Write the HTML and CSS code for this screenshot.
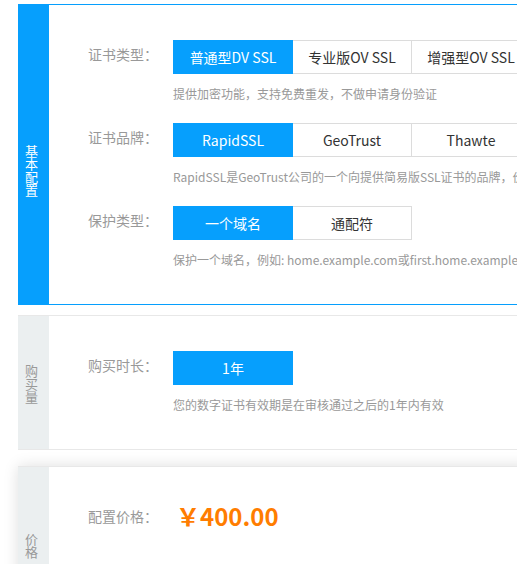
FILE: index.html
```html
<!DOCTYPE html>
<html lang="zh-CN">
<head>
<meta charset="utf-8">
<title>SSL证书配置</title>
<link rel="stylesheet" href="styles.css">
</head>
<body>
<div class="page">
  <section class="panel panel-main">
    <div class="side side-main"><span class="side-text">基本配置</span></div>
    <div class="content">
      <div class="row">
        <div class="field">
          <span class="label">证书类型：</span>
          <div class="options">
            <span class="opt active">普通型DV SSL</span>
            <span class="opt">专业版OV SSL</span>
            <span class="opt">增强型OV SSL</span>
            <span class="opt">增强型EV SSL</span>
          </div>
        </div>
        <p class="desc">提供加密功能，支持免费重发，不做申请身份验证</p>
      </div>
      <div class="row">
        <div class="field">
          <span class="label">证书品牌：</span>
          <div class="options">
            <span class="opt active">RapidSSL</span>
            <span class="opt">GeoTrust</span>
            <span class="opt">Thawte</span>
            <span class="opt">Symantec</span>
          </div>
        </div>
        <p class="desc">RapidSSL是GeoTrust公司的一个向提供简易版SSL证书的品牌，价格低廉，签发快速</p>
      </div>
      <div class="row">
        <div class="field">
          <span class="label">保护类型：</span>
          <div class="options">
            <span class="opt active">一个域名</span>
            <span class="opt">通配符</span>
          </div>
        </div>
        <p class="desc">保护一个域名，例如: home.example.com或first.home.example.com</p>
      </div>
    </div>
  </section>

  <section class="panel panel-plain">
    <div class="side side-buy"><span class="side-text">购买量</span></div>
    <div class="content">
      <div class="row">
        <div class="field">
          <span class="label">购买时长：</span>
          <div class="options">
            <span class="opt active">1年</span>
          </div>
        </div>
        <p class="desc">您的数字证书有效期是在审核通过之后的1年内有效</p>
      </div>
    </div>
  </section>

  <section class="panel panel-plain panel-shadow">
    <div class="side side-price"><span class="side-text">价格</span></div>
    <div class="content">
      <div class="row">
        <div class="field">
          <span class="label">配置价格：</span>
          <span class="price">￥400.00</span>
        </div>
      </div>
    </div>
  </section>
</div>
</body>
</html>
```

FILE: styles.css
```css
html, body {
  margin: 0;
  padding: 0;
  overflow: hidden;
  background: #fff;
}

body {
  font-family: "Noto Sans CJK SC", "Noto Sans", sans-serif;
  color: #333;
}

.page {
  width: 900px;
  padding: 4px 0 0 18px;
}

.panel {
  display: flex;
  box-sizing: border-box;
  background: #fff;
}

.panel-main {
  border: 1px solid #069ffd;
  border-left: none;
  margin-bottom: 10px;
}

.panel-plain {
  border: 1px solid #e8e8e8;
  border-left: none;
  margin-bottom: 16px;
}

.panel-shadow {
  box-shadow: 0 0 14px rgba(0, 0, 0, 0.13);
  min-height: 140px;
}

.side {
  width: 31px;
  flex: none;
  box-sizing: border-box;
  padding-left: 6px;
  background: #ebeff0;
  color: #999;
}

.side-main {
  background: #069ffd;
  color: #fff;
  padding-top: 140px;
}

.side-buy {
  padding-top: 49px;
}

.side-price {
  padding-top: 66px;
}

.side-text {
  display: block;
  writing-mode: vertical-rl;
  text-orientation: upright;
  font-size: 13px;
  line-height: 14px;
}

.content {
  flex: 1;
  padding: 35px 0 35px 39px;
}

.row {
  margin-bottom: 20px;
}

.row:last-child {
  margin-bottom: 0;
}

.field {
  display: flex;
  align-items: flex-start;
}

.label {
  width: 85px;
  flex: none;
  font-size: 14px;
  line-height: 28px;
  color: #999;
}

.options {
  display: flex;
}

.opt {
  box-sizing: border-box;
  width: 120px;
  height: 34px;
  margin-left: -1px;
  border: 1px solid #dcdcdc;
  display: flex;
  align-items: center;
  justify-content: center;
  font-size: 14px;
  color: #333;
  background: #fff;
  white-space: nowrap;
}

.opt:first-child {
  margin-left: 0;
}

.opt.active {
  background: #069ffd;
  border-color: #069ffd;
  color: #fff;
  position: relative;
  z-index: 1;
}

.desc {
  margin: 10px 0 0 85px;
  font-size: 12px;
  line-height: 19px;
  color: #999;
  white-space: nowrap;
}

.price {
  font-size: 24px;
  line-height: 28px;
  font-weight: bold;
  color: #ff7d00;
  margin-left: 3px;
}
```
